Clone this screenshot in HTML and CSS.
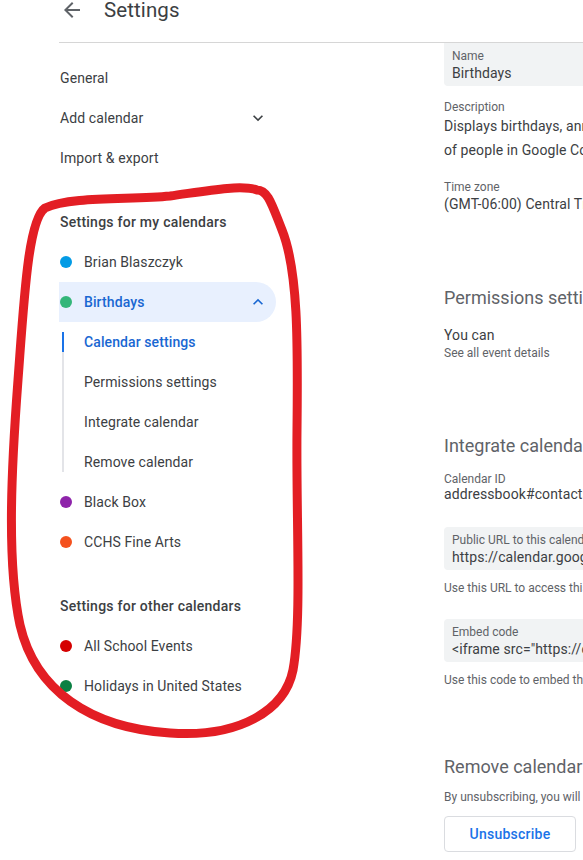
FILE: index.html
```html
<!DOCTYPE html>
<html lang="en">
<head>
<meta charset="utf-8">
<title>Settings</title>
<link rel="stylesheet" href="styles.css">
</head>
<body>
<div class="page">
  <header class="topbar">
    <svg class="back" viewBox="0 0 24 24" width="24" height="24" aria-hidden="true"><path d="M20 11H7.83l5.59-5.59L12 4l-8 8 8 8 1.41-1.41L7.83 13H20v-2z" fill="#5f6368"/></svg>
    <h1 class="title">Settings</h1>
  </header>
  <div class="main">
    <nav class="side">
      <div class="item">General</div>
      <div class="item item-split">Add calendar
        <svg class="chev" viewBox="0 0 24 24" width="20" height="20" aria-hidden="true"><path d="M16.59 8.59L12 13.17 7.41 8.59 6 10l6 6 6-6z" fill="#3c4043"/></svg>
      </div>
      <div class="item">Import &amp; export</div>

      <div class="group-title">Settings for my calendars</div>
      <div class="item cal"><span class="dot dot-blue"></span>Brian Blaszczyk</div>
      <div class="item cal cal-open item-split"><span class="cal-name"><span class="dot dot-green"></span>Birthdays</span>
        <svg class="chev" viewBox="0 0 24 24" width="20" height="20" aria-hidden="true"><path d="M7.41 15.41L12 10.83l4.59 4.58L18 14l-6-6-6 6z" fill="#1967d2"/></svg>
      </div>
      <div class="sub">
        <div class="item sub-item sub-active">Calendar settings</div>
        <div class="item sub-item">Permissions settings</div>
        <div class="item sub-item">Integrate calendar</div>
        <div class="item sub-item">Remove calendar</div>
      </div>
      <div class="item cal"><span class="dot dot-purple"></span>Black Box</div>
      <div class="item cal"><span class="dot dot-orange"></span>CCHS Fine Arts</div>

      <div class="group-title">Settings for other calendars</div>
      <div class="item cal"><span class="dot dot-red"></span>All School Events</div>
      <div class="item cal"><span class="dot dot-dkgreen"></span>Holidays in United States</div>
    </nav>

    <section class="content">
      <div class="field field-top">
        <div class="field-label">Name</div>
        <div class="field-value">Birthdays</div>
      </div>
      <div class="label desc-label">Description</div>
      <div class="desc">Displays birthdays, anniversaries, and other event dates<br>of people in Google Contacts.</div>
      <div class="label tz-label">Time zone</div>
      <div class="value">(GMT-06:00) Central Time - Chicago</div>

      <h2 class="heading perm-heading">Permissions settings</h2>
      <div class="value you-can">You can</div>
      <div class="hint">See all event details</div>

      <h2 class="heading int-heading">Integrate calendar</h2>
      <div class="label id-label">Calendar ID</div>
      <div class="value id-value">addressbook#contacts@group.v.calendar.google.com</div>
      <div class="field url-field">
        <div class="field-label">Public URL to this calendar</div>
        <div class="field-value">https://calendar.google.com/calendar/embed?src=addressbook</div>
      </div>
      <div class="hint url-hint">Use this URL to access this calendar from a web browser.</div>
      <div class="field embed-field">
        <div class="field-label">Embed code</div>
        <div class="field-value">&lt;iframe src="https://calendar.google.com/calendar/embed</div>
      </div>
      <div class="hint embed-hint">Use this code to embed this calendar in a web page.</div>

      <h2 class="heading rm-heading">Remove calendar</h2>
      <div class="hint rm-hint">By unsubscribing, you will no longer have access to this calendar.</div>
      <button class="btn" type="button">Unsubscribe</button>
    </section>
  </div>

  <svg class="annot" viewBox="0 0 583 860" width="583" height="860" aria-hidden="true">
    <path d="M257 190 C240 184, 200 192, 170 196 C130 200, 70 196, 45 208 C28 220, 24 300, 18 380 C12 460, 6 560, 20 625 C35 690, 90 728, 170 733 C240 738, 285 710, 293 670 C302 620, 296 520, 297 430 C298 340, 298 270, 282 230 C272 205, 268 190, 257 190 Z" fill="none" stroke="#e31e24" stroke-width="9" stroke-linejoin="round" stroke-linecap="round"/>
  </svg>
</div>
</body>
</html>
```

FILE: styles.css
```css
* { box-sizing: border-box; }

html, body {
  margin: 0;
  padding: 0;
  background: #ffffff;
}

body {
  font-family: Roboto, "Liberation Sans", Arial, sans-serif;
  color: #3c4043;
  -webkit-font-smoothing: antialiased;
}

.page {
  position: relative;
  width: 583px;
  height: 860px;
  overflow: hidden;
}

.topbar {
  height: 42px;
  display: flex;
  align-items: flex-start;
  padding-left: 60px;
}

.back {
  display: block;
  margin-top: -2px;
}

.title {
  margin: 0 0 0 20px;
  font-size: 20.5px;
  line-height: 20px;
  font-weight: 400;
  color: #3c4043;
  letter-spacing: 0.1px;
}

.main {
  margin-left: 59px;
  border-top: 1px solid #d6d6d6;
  display: grid;
  grid-template-columns: 217px 420px;
  column-gap: 168px;
  align-items: start;
}

/* Sidebar */
.side {
  padding-top: 15px;
  font-size: 14px;
}

.item {
  height: 40px;
  display: flex;
  align-items: center;
  padding-left: 1px;
  color: #3c4043;
  font-size: 14px;
  letter-spacing: 0.1px;
  white-space: nowrap;
}

.item-split {
  justify-content: space-between;
  padding-right: 8px;
}

.chev {
  display: block;
}

.group-title {
  margin-top: 24px;
  height: 40px;
  display: flex;
  align-items: center;
  padding-left: 1px;
  font-size: 14px;
  font-weight: 500;
  letter-spacing: 0.25px;
  color: #3c4043;
}

.dot {
  width: 12px;
  height: 12px;
  border-radius: 50%;
  margin-right: 12px;
  flex: none;
}

.cal-name {
  display: flex;
  align-items: center;
}

.dot-blue { background: #039be5; }
.dot-green { background: #33b679; }
.dot-purple { background: #8e24aa; }
.dot-orange { background: #f4511e; }
.dot-red { background: #d50000; }
.dot-dkgreen { background: #0b8043; }

.cal-open {
  background: #e8f0fe;
  border-radius: 0 20px 20px 0;
  color: #1967d2;
  font-weight: 500;
}

.sub {
  position: relative;
}

.sub::before {
  content: "";
  position: absolute;
  left: 3px;
  top: 10px;
  bottom: 10px;
  width: 2px;
  background: #e3e4e8;
}

.sub-item {
  position: relative;
  padding-left: 25px;
}

.sub-active {
  color: #1967d2;
  font-weight: 500;
}

.sub-active::before {
  content: "";
  position: absolute;
  left: 3px;
  top: 10px;
  width: 2px;
  height: 20px;
  background: #1a73e8;
}

/* Content */
.content {
  white-space: nowrap;
}

.field {
  background: #f1f3f4;
  border-radius: 4px;
  padding: 6px 8px 3px;
}

.field-top {
  border-radius: 0 0 0 4px;
}

.field-label {
  font-size: 12px;
  line-height: 14px;
  color: #5f6368;
}

.field-value {
  font-size: 14px;
  line-height: 20px;
  color: #3c4043;
  letter-spacing: 0.1px;
}

.label {
  font-size: 12px;
  line-height: 14px;
  color: #5f6368;
}

.value {
  font-size: 14px;
  line-height: 20px;
  color: #3c4043;
  letter-spacing: 0.1px;
}

.desc {
  font-size: 14px;
  line-height: 24px;
  color: #3c4043;
  letter-spacing: 0.1px;
}

.desc-label { margin-top: 14px; }
.tz-label { margin-top: 18px; }

.heading {
  margin: 0;
  font-size: 18px;
  line-height: 24px;
  font-weight: 400;
  color: #5f6368;
}

.perm-heading { margin-top: 72px; }
.you-can { margin-top: 15px; }

.hint {
  font-size: 12px;
  line-height: 16px;
  color: #5f6368;
}

.int-heading { margin-top: 73px; }
.id-label { margin-top: 14px; }
.id-value { line-height: 16px; }
.url-field { margin-top: 25px; }
.url-hint { margin-top: 10px; }
.embed-field { margin-top: 23px; }
.embed-hint { margin-top: 10px; }
.rm-heading { margin-top: 67px; }
.rm-hint { margin-top: 10px; }

.btn {
  margin-top: 11px;
  width: 132px;
  height: 36px;
  border: 1px solid #dadce0;
  border-radius: 4px;
  background: #ffffff;
  color: #1a73e8;
  font-family: Roboto, "Liberation Sans", Arial, sans-serif;
  font-size: 14px;
  font-weight: 500;
  letter-spacing: 0.25px;
  padding: 0;
  display: block;
}

/* Hand-drawn annotation overlay */
.annot {
  position: absolute;
  left: 0;
  top: 0;
  pointer-events: none;
}
```
